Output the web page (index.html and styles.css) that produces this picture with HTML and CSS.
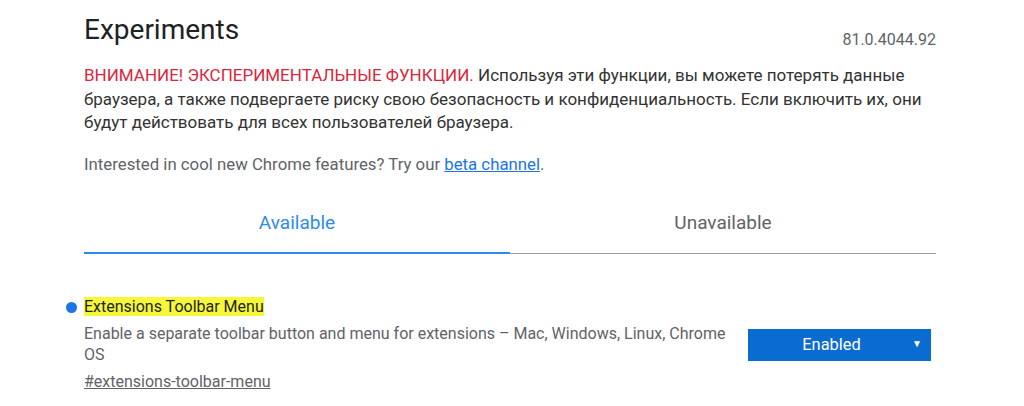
FILE: index.html
```html
<!DOCTYPE html>
<html lang="ru">
<head>
<meta charset="utf-8">
<title>Experiments</title>
<link rel="stylesheet" href="styles.css">
</head>
<body>
<main class="page">
  <header class="header">
    <h1 class="title">Experiments</h1>
    <span class="version">81.0.4044.92</span>
  </header>
  <p class="warning"><span class="warning-label">ВНИМАНИЕ! ЭКСПЕРИМЕНТАЛЬНЫЕ ФУНКЦИИ.</span> Используя эти функции, вы можете потерять данные браузера, а также подвергаете риску свою безопасность и конфиденциальность. Если включить их, они будут действовать для всех пользователей браузера.</p>
  <p class="promo">Interested in cool new Chrome features? Try our <a class="promo-link" href="#">beta channel</a>.</p>
  <nav class="tabs">
    <div class="tab tab-active">Available</div>
    <div class="tab">Unavailable</div>
  </nav>
  <section class="experiment">
    <div class="experiment-info">
      <h2 class="experiment-name"><span class="dot"></span><mark class="highlight">Extensions Toolbar Menu</mark></h2>
      <p class="experiment-desc">Enable a separate toolbar button and menu for extensions – Mac, Windows, Linux, Chrome OS</p>
      <a class="permalink" href="#">#extensions-toolbar-menu</a>
    </div>
    <div class="select">
      <span class="select-label">Enabled</span>
      <span class="select-arrow">▼</span>
    </div>
  </section>
</main>
</body>
</html>
```
FILE: styles.css
```css
* { box-sizing: border-box; }
html, body { margin: 0; padding: 0; background: #fff; }
body {
  font-family: Roboto, "Liberation Sans", sans-serif;
  color: #333;
  font-size: 16px;
}
.page {
  width: 852px;
  margin-left: 84px;
}
.header {
  display: flex;
  justify-content: space-between;
  align-items: flex-end;
  padding-top: 10px;
}
.title {
  margin: 0;
  font-size: 28px;
  font-weight: 400;
  color: #202124;
  line-height: 40px;
}
.version {
  color: #5f6368;
  font-size: 16px;
  line-height: 20px;
}
.warning {
  margin: 14px 0 0;
  font-size: 17px;
  line-height: 23.5px;
  color: #333;
}
.warning-label { color: #d9263c; }
.promo {
  margin: 17.5px 0 0;
  font-size: 16.8px;
  color: #5f6368;
  line-height: 24px;
}
.promo-link { color: #1a73e8; }
.tabs {
  display: flex;
  margin-top: 35px;
  border-bottom: 1px solid #9aa0a6;
}
.tab {
  flex: 1;
  text-align: center;
  font-size: 19px;
  color: #5f6368;
  padding-bottom: 18px;
  line-height: 24px;
}
.tab-active {
  color: #2b8cf0;
  box-shadow: inset 0 -2px 0 #2b8cf0;
  margin-bottom: -1px;
  padding-bottom: 19px;
}
.experiment {
  display: flex;
  justify-content: space-between;
  align-items: center;
  margin-top: 43px;
  padding-right: 5px;
}
.experiment-info { width: 650px; }
.experiment-name {
  position: relative;
  margin: 0;
  font-size: 16px;
  font-weight: 400;
  line-height: 20px;
}
.dot {
  position: absolute;
  left: -18px;
  top: 5px;
  width: 11px;
  height: 11px;
  border-radius: 50%;
  background: #1a73e8;
}
.highlight {
  background: #f7f73a;
  color: #1f1f1f;
}
.experiment-desc {
  margin: 5.5px 0 0;
  color: #5f6368;
  line-height: 21px;
}
.permalink {
  display: inline-block;
  margin-top: 6px;
  color: #5f6368;
  line-height: 22px;
}
.select {
  position: relative;
  width: 183px;
  height: 32px;
  padding-right: 16px;
  background: #0a6bd0;
  color: #fff;
  display: flex;
  align-items: center;
  justify-content: center;
}
.select-label { font-size: 16.4px; }
.select-arrow {
  position: absolute;
  right: 9px;
  top: 9px;
  font-size: 10px;
}
```
